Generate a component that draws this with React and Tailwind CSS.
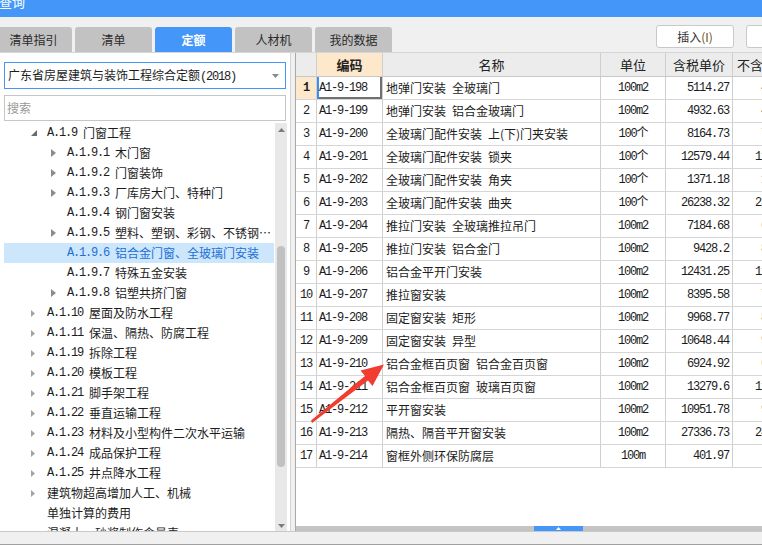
import React from 'react';

const tree = [
  { code: 'A.1.9', name: '门窗工程', level: 1, arrow: 'open' },
  { code: 'A.1.9.1', name: '木门窗', level: 2, arrow: 'closed' },
  { code: 'A.1.9.2', name: '门窗装饰', level: 2, arrow: 'closed' },
  { code: 'A.1.9.3', name: '厂库房大门、特种门', level: 2, arrow: 'closed' },
  { code: 'A.1.9.4', name: '钢门窗安装', level: 2 },
  { code: 'A.1.9.5', name: '塑料、塑钢、彩钢、不锈钢…', level: 2, arrow: 'closed' },
  { code: 'A.1.9.6', name: '铝合金门窗、全玻璃门安装', level: 2, selected: true },
  { code: 'A.1.9.7', name: '特殊五金安装', level: 2 },
  { code: 'A.1.9.8', name: '铝塑共挤门窗', level: 2, arrow: 'closed' },
  { code: 'A.1.10', name: '屋面及防水工程', level: 1, arrow: 'closed' },
  { code: 'A.1.11', name: '保温、隔热、防腐工程', level: 1, arrow: 'closed' },
  { code: 'A.1.19', name: '拆除工程', level: 1, arrow: 'closed' },
  { code: 'A.1.20', name: '模板工程', level: 1, arrow: 'closed' },
  { code: 'A.1.21', name: '脚手架工程', level: 1, arrow: 'closed' },
  { code: 'A.1.22', name: '垂直运输工程', level: 1, arrow: 'closed' },
  { code: 'A.1.23', name: '材料及小型构件二次水平运输', level: 1, arrow: 'closed' },
  { code: 'A.1.24', name: '成品保护工程', level: 1, arrow: 'closed' },
  { code: 'A.1.25', name: '井点降水工程', level: 1, arrow: 'closed' },
  { code: '', name: '建筑物超高增加人工、机械', level: 1, arrow: 'closed' },
  { code: '', name: '单独计算的费用', level: 1 },
  { code: '', name: '混凝土、砂浆制作含量表', level: 1 },
];

const rows = [
  ['A1-9-198', '地弹门安装\u2002全玻璃门', '100m2', '5114.27', '4563.12'],
  ['A1-9-199', '地弹门安装\u2002铝合金玻璃门', '100m2', '4932.63', '4401.85'],
  ['A1-9-200', '全玻璃门配件安装\u2002上(下)门夹安装', '100个', '8164.73', '7232.46'],
  ['A1-9-201', '全玻璃门配件安装\u2002锁夹', '100个', '12579.44', '11148.36'],
  ['A1-9-202', '全玻璃门配件安装\u2002角夹', '100个', '1371.18', '1215.40'],
  ['A1-9-203', '全玻璃门配件安装\u2002曲夹', '100个', '26238.32', '23253.16'],
  ['A1-9-204', '推拉门安装\u2002全玻璃推拉吊门', '100m2', '7184.68', '6410.22'],
  ['A1-9-205', '推拉门安装\u2002铝合金门', '100m2', '9428.2', '8413.05'],
  ['A1-9-206', '铝合金平开门安装', '100m2', '12431.25', '11017.27'],
  ['A1-9-207', '推拉窗安装', '100m2', '8395.58', '7491.63'],
  ['A1-9-208', '固定窗安装\u2002矩形', '100m2', '9968.77', '8895.41'],
  ['A1-9-209', '固定窗安装\u2002异型', '100m2', '10648.44', '9501.90'],
  ['A1-9-210', '铝合金框百页窗\u2002铝合金百页窗', '100m2', '6924.92', '6179.32'],
  ['A1-9-211', '铝合金框百页窗\u2002玻璃百页窗', '100m2', '13279.6', '11768.73'],
  ['A1-9-212', '平开窗安装', '100m2', '10951.78', '9772.29'],
  ['A1-9-213', '隔热、隔音平开窗安装', '100m2', '27336.73', '24227.61'],
  ['A1-9-214', '窗框外侧环保防腐层', '100m', '401.97', '358.70'],
];

const tabs = ['清单指引', '清单', '定额', '人材机', '我的数据'];

function TreeArrow({ type, level }) {
  if (type === 'open') {
    return (
      <svg width="7" height="7" viewBox="0 0 7 7" className="mt-[1px]">
        <polygon points="6,0 6,6 0,6" fill="#6b6b6b" />
      </svg>
    );
  }
  if (type === 'closed') {
    return level === 1 ? (
      <svg width="4" height="7" viewBox="0 0 4 7">
        <polygon points="0,0 4,3.5 0,7" fill="#a3a3a3" />
      </svg>
    ) : (
      <svg width="5" height="8" viewBox="0 0 5 8">
        <polygon points="0,0 5,4 0,8" fill="#8c8c8c" />
      </svg>
    );
  }
  return null;
}

function TreeRow({ item }) {
  return (
    <div
      className={`h-[20px] flex items-center whitespace-nowrap ${
        item.selected ? 'bg-[#cce6fb] text-[#1d6fd8]' : 'text-[#1c1c1c]'
      }`}
    >
      <div className={item.level === 1 ? 'w-[27px] shrink-0' : 'w-[47px] shrink-0'} />
      <div className="w-[16px] shrink-0 flex items-center">
        <TreeArrow type={item.arrow} level={item.level} />
      </div>
      {item.code && (
        <span className="font-['Liberation_Mono',monospace] text-[12px] tracking-[-1.2px]">
          {item.code}&nbsp;
        </span>
      )}
      <span className="font-['Noto_Sans_CJK_SC',sans-serif] text-[12px]">{item.name}</span>
    </div>
  );
}

export default function App() {
  return (
    <div className="relative w-[762px] h-[545px] overflow-hidden bg-[#f0f0f0] flex flex-col font-['Noto_Sans_CJK_SC',sans-serif]">
      {/* title bar */}
      <div className="h-[17px] shrink-0 bg-[#4497f8] overflow-hidden">
        <div className="-mt-[6px] -ml-[1px] text-white text-[13px] leading-[16px]">查询</div>
      </div>

      {/* tabs + buttons */}
      <div className="h-[36px] shrink-0 flex items-end border-b border-[#d6d6d6] overflow-hidden">
        <div className="flex items-end gap-[3px] -ml-[5px] shrink-0">
          {tabs.map((t) => (
            <div
              key={t}
              className={`w-[77px] h-[25px] rounded-t-[3px] flex items-center justify-center text-[12px] ${
                t === '定额' ? 'bg-[#4497f8] text-white font-bold' : 'bg-[#c2c2c2] text-[#2a2a2a]'
              }`}
            >
              {t}
            </div>
          ))}
        </div>
        <div className="self-start mt-[8px] ml-[264px] flex gap-[12px] shrink-0">
          <div className="w-[78px] h-[23px] bg-white border border-[#c9c9c9] rounded-[3px] flex items-center justify-center text-[12px] text-[#333]">
            插入<span className="text-[#6b4a1a]">(I)</span>
          </div>
          <div className="w-[78px] h-[23px] bg-white border border-[#c9c9c9] rounded-[3px]" />
        </div>
      </div>

      {/* main */}
      <div className="flex h-[478px] shrink-0">
        {/* left panel */}
        <div className="w-[291px] shrink-0 bg-white border-r border-[#d4d4d4] flex flex-col pt-[9px]">
          <div className="mx-[4px] h-[27px] border border-[#4497f8] flex items-center pl-[3px] pr-[6px]">
            <span className="text-[12px] text-[#1c1c1c] whitespace-nowrap">
              广东省房屋建筑与装饰工程综合定额
              <span className="font-['Liberation_Mono',monospace] tracking-[-1.2px]">(2018)</span>
            </span>
            <svg width="7" height="4" viewBox="0 0 7 4" className="ml-auto">
              <polygon points="0,0 7,0 3.5,4" fill="#8a8a8a" />
            </svg>
          </div>
          <div className="mx-[4px] mt-[6px] h-[26px] border border-[#c6c6c6] flex items-center pl-[2px] text-[12px] text-[#9a9a9a]">
            搜索
          </div>
          <div className="mt-[2px] flex-1 flex min-h-0">
            <div className="flex-1 overflow-hidden pl-[4px] pr-[1px]">
              {tree.map((item, i) => (
                <TreeRow key={i} item={item} />
              ))}
            </div>
            <div className="w-[12px] mr-[3px] bg-[#e8e8e8] flex flex-col items-center">
              <svg width="7" height="4" viewBox="0 0 7 4" className="mt-[5px]">
                <polygon points="3.5,0 7,4 0,4" fill="#7d7d7d" />
              </svg>
              <div className="mt-[114px] w-[8px] h-[221px] rounded-full bg-[#c1c1c1]" />
              <svg width="7" height="4" viewBox="0 0 7 4" className="mt-auto mb-[3px]">
                <polygon points="0,0 7,0 3.5,4" fill="#7d7d7d" />
              </svg>
            </div>
          </div>
        </div>

        <div className="w-[4px] shrink-0" />

        {/* right panel */}
        <div className="flex-1 min-w-0 bg-white border-l border-[#a9a9a9] flex flex-col overflow-hidden">
          <div className="flex-1 overflow-hidden">
            {/* header */}
            <div className="flex h-[24px] border-b border-[#c8c8c8] text-[13px] text-[#222]">
              <div className="w-[21px] shrink-0 bg-[#ececec] border-r border-[#cfcfcf]" />
              <div className="w-[66px] shrink-0 bg-[#fde8cb] border-r border-[#cfcfcf] flex items-center justify-center font-bold">
                编码
              </div>
              <div className="w-[218px] shrink-0 bg-[#ececec] border-r border-[#cfcfcf] flex items-center justify-center">
                名称
              </div>
              <div className="w-[65px] shrink-0 bg-[#ececec] border-r border-[#cfcfcf] flex items-center justify-center">
                单位
              </div>
              <div className="w-[67px] shrink-0 bg-[#ececec] border-r border-[#cfcfcf] flex items-center justify-center">
                含税单价
              </div>
              <div className="w-[74px] shrink-0 bg-[#ececec] border-r border-[#cfcfcf] flex items-center justify-center whitespace-nowrap">
                不含税单价
              </div>
            </div>
            {rows.map((r, i) => (
              <div key={i} className="flex h-[23px] border-b border-[#d6d6d6] text-[12px] text-[#1c1c1c]">
                <div
                  className={`w-[21px] shrink-0 border-r border-[#cfcfcf] flex items-center justify-center font-['Liberation_Mono',monospace] tracking-[-1.2px] ${
                    i === 0 ? 'bg-[#fde8cb] font-bold' : 'bg-white'
                  }`}
                >
                  {i + 1}
                </div>
                <div
                  className={`w-[66px] shrink-0 border-r border-[#cfcfcf] flex items-center pl-[2px] font-['Liberation_Mono',monospace] tracking-[-1.2px] ${
                    i === 0 ? 'shadow-[inset_2px_0_0_#3d8ef2,inset_-2px_-2px_0_#707070]' : ''
                  }`}
                >
                  {r[0]}
                </div>
                <div className="w-[218px] shrink-0 border-r border-[#cfcfcf] flex items-center pl-[3px] whitespace-nowrap overflow-hidden">
                  {r[1]}
                </div>
                <div className="w-[65px] shrink-0 border-r border-[#cfcfcf] flex items-center justify-center font-['Liberation_Mono','Noto_Sans_CJK_SC',monospace] tracking-[-1.2px]">
                  {r[2]}
                </div>
                <div className="w-[67px] shrink-0 border-r border-[#cfcfcf] flex items-center justify-end pr-[3px] font-['Liberation_Mono',monospace] tracking-[-1.2px]">
                  {r[3]}
                </div>
                <div className="w-[74px] shrink-0 border-r border-[#cfcfcf] flex items-center justify-end pr-[3px] font-['Liberation_Mono',monospace] tracking-[-1.2px]">
                  {r[4]}
                </div>
              </div>
            ))}
          </div>
          {/* horizontal scrollbar */}
          <div className="h-[5px] shrink-0 bg-[#c4c4c4] flex">
            <div className="ml-[238px] w-[49px] h-[5px] bg-[#4497f8] flex items-center justify-center">
              <svg width="5" height="3" viewBox="0 0 5 3">
                <polygon points="2.5,0 5,3 0,3" fill="#ffffff" />
              </svg>
            </div>
          </div>
        </div>
      </div>

      {/* bottom bar */}
      <div className="flex-1 border-t border-[#c9c9c9] border-b border-b-[#a0a0a0] bg-[#f0f0f0]" />

      {/* red annotation arrow */}
      <svg className="absolute left-0 top-0 pointer-events-none" width="762" height="545" viewBox="0 0 762 545">
        <polygon
          points="312,423 368,380.5 372.5,386 384,364.5 360.5,370.5 365,376 311,420.5"
          fill="#f23c30"
        />
      </svg>
    </div>
  );
}
